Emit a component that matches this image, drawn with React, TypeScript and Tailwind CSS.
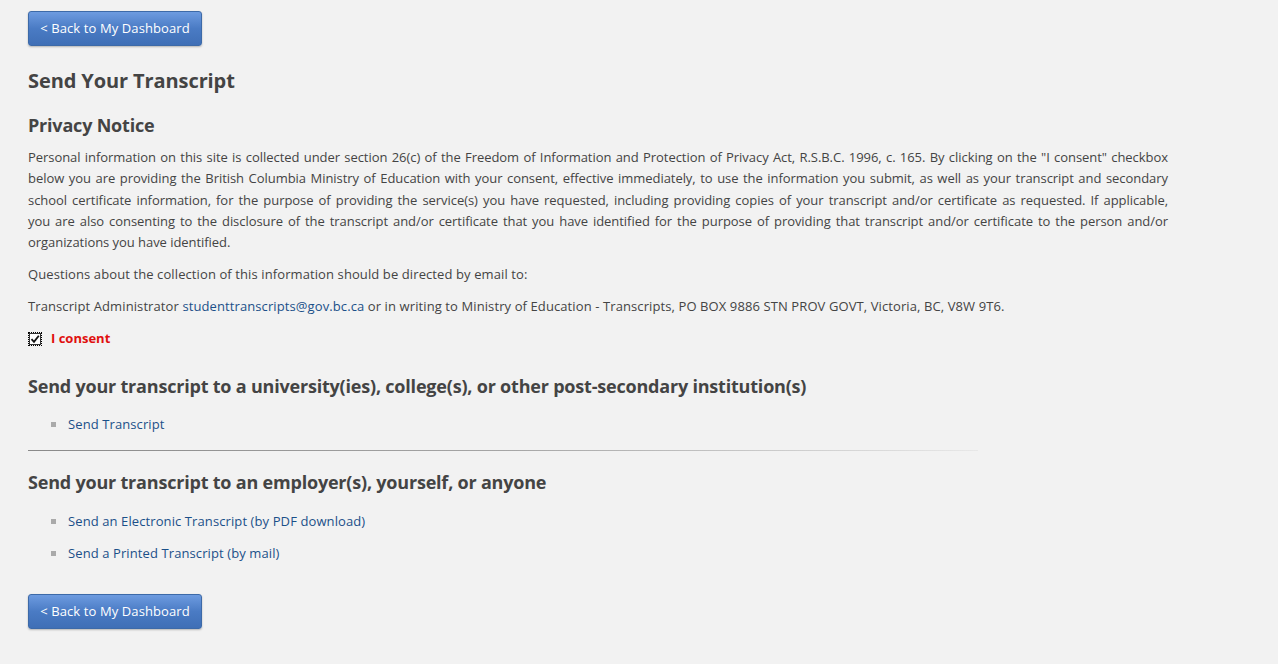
import React from "react";

const FONT = { fontFamily: '"Open Sans", "Segoe UI", sans-serif' };

// The notice wraps exactly like the original page, so each line is laid out on its own.
const NOTICE_LINES = [
  'Personal information on this site is collected under section 26(c) of the Freedom of Information and Protection of Privacy Act, R.S.B.C. 1996, c. 165. By clicking on the "I consent" checkbox',
  "below you are providing the British Columbia Ministry of Education with your consent, effective immediately, to use the information you submit, as well as your transcript and secondary",
  "school certificate information, for the purpose of providing the service(s) you have requested, including providing copies of your transcript and/or certificate as requested. If applicable,",
  "you are also consenting to the disclosure of the transcript and/or certificate that you have identified for the purpose of providing that transcript and/or certificate to the person and/or",
  "organizations you have identified.",
];

function BackButton() {
  return (
    <button className="h-[35px] w-[174px] rounded-[3px] border border-[#3d6aa8] bg-gradient-to-b from-[#6d9be0] via-[#4a7bc4] to-[#3f6fb6] text-[13px] text-white shadow-[0_1px_2px_rgba(0,0,0,0.25)] tracking-[0.1px]">
      &lt; Back to My Dashboard
    </button>
  );
}

function LinkItem({ label }: { label: string }) {
  return (
    <li className="flex items-center h-[32px]">
      <span className="ml-[23px] mr-[12px] h-[5px] w-[5px] bg-[#aaaaaa]" />
      <a href="#" className="text-[13px] text-[#1b5089] tracking-[0.1px]">
        {label}
      </a>
    </li>
  );
}

export default function App() {
  return (
    <div className="min-h-[664px] bg-[#f2f2f2] text-[#444444]" style={FONT}>
      <div className="pl-[28px] pt-[11px] w-[1168px]">
        <BackButton />

        <h1 className="mt-[21px] text-[20px] font-bold leading-[28px] tracking-[-0.1px]">
          Send Your Transcript
        </h1>

        <h2 className="mt-[17px] text-[18px] font-bold leading-[26px] tracking-[-0.2px]">
          Privacy Notice
        </h2>

        <p className="mt-[9px] text-[13px] leading-[21.25px] tracking-[-0.05px]">
          {NOTICE_LINES.map((line, i) => (
            <span
              key={i}
              className={
                i < NOTICE_LINES.length - 1
                  ? "block whitespace-nowrap text-justify [text-align-last:justify]"
                  : "block"
              }
            >
              {line}
            </span>
          ))}
        </p>

        <p className="mt-[11px] text-[13px] leading-[21px] tracking-[0.1px]">
          Questions about the collection of this information should be directed by email to:
        </p>

        <p className="mt-[11px] text-[13px] leading-[21px] tracking-[0.1px]">
          Transcript Administrator{" "}
          <a href="#" className="text-[#1b5089]">
            studenttranscripts@gov.bc.ca
          </a>{" "}
          or in writing to Ministry of Education - Transcripts, PO BOX 9886 STN PROV GOVT, Victoria,
          BC, V8W 9T6.
        </p>

        <label className="mt-[11px] flex items-center h-[21px]">
          <span className="flex h-[14px] w-[14px] items-center justify-center border border-dotted border-black">
            <span className="flex h-[12px] w-[12px] items-center justify-center border border-[#333] bg-white">
              <svg viewBox="0 0 10 10" className="h-[10px] w-[10px]">
                <path d="M1.5 5.2 L4 7.8 L8.8 1.8" fill="none" stroke="#111" strokeWidth="1.8" />
              </svg>
            </span>
          </span>
          <span className="ml-[9px] text-[13px] font-bold text-[#e0100f] tracking-[0px]">
            I consent
          </span>
        </label>

        <h2 className="mt-[24px] text-[18px] font-bold leading-[26px] tracking-[-0.2px]">
          Send your transcript to a university(ies), college(s), or other post-secondary
          institution(s)
        </h2>

        <ul className="mt-[9px]">
          <LinkItem label="Send Transcript" />
        </ul>

        <div className="mt-[10px] h-px w-[950px] bg-gradient-to-r from-[#8a8a8a] via-[#a5a5a5] to-[#e8e8e8]" />

        <h2 className="mt-[18px] text-[18px] font-bold leading-[26px] tracking-[-0.2px]">
          Send your transcript to an employer(s), yourself, or anyone
        </h2>

        <ul className="mt-[10px]">
          <LinkItem label="Send an Electronic Transcript (by PDF download)" />
          <LinkItem label="Send a Printed Transcript (by mail)" />
        </ul>

        <div className="mt-[25px]">
          <BackButton />
        </div>
      </div>
    </div>
  );
}
